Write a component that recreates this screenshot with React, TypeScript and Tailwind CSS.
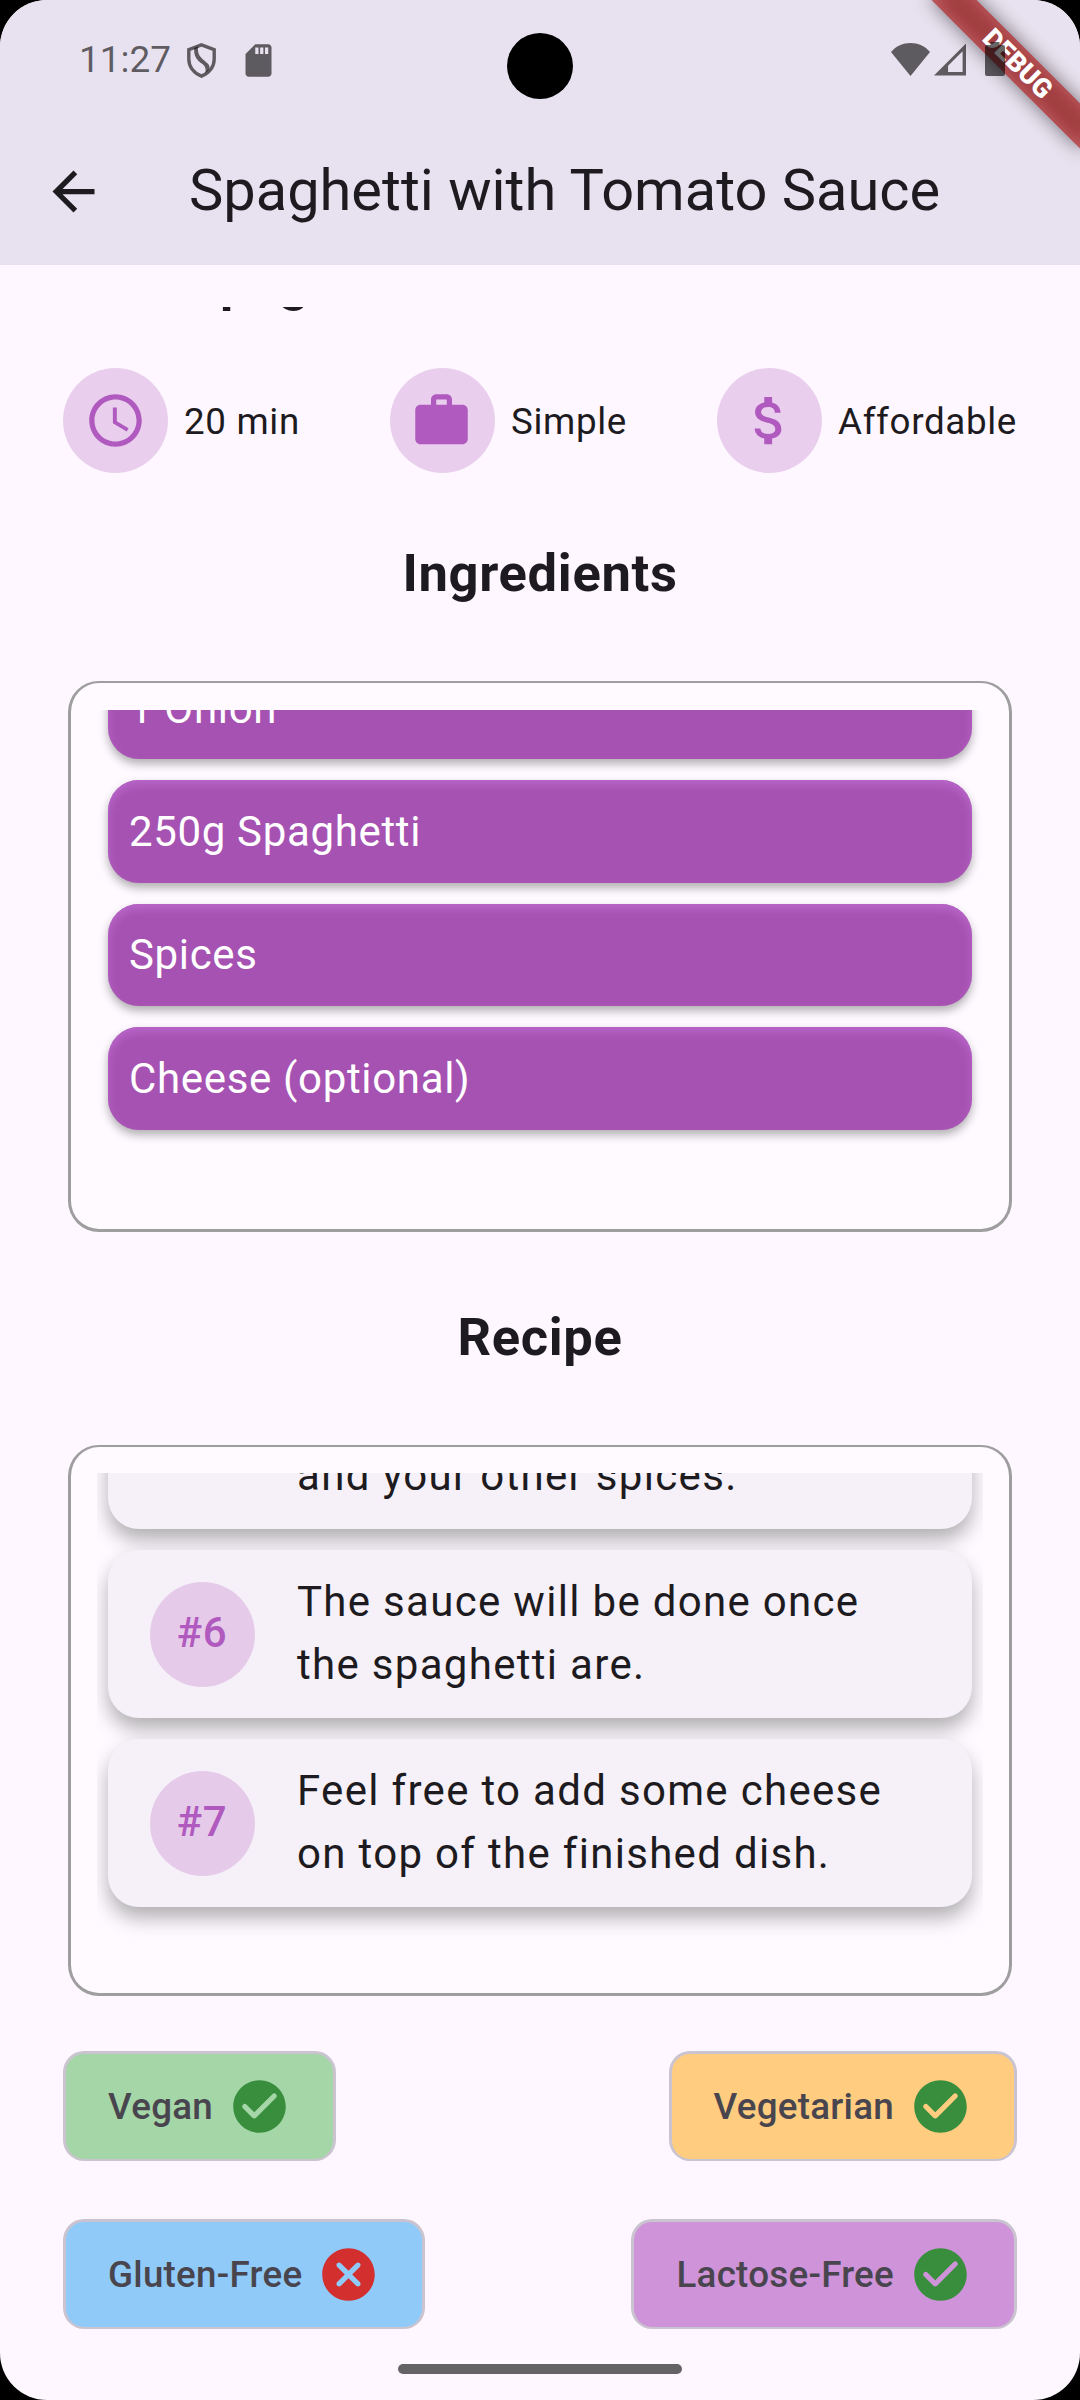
import type { ReactNode } from "react";

type IconProps = { d: string; className?: string };

function Icon({ d, className = "" }: IconProps) {
  return (
    <svg viewBox="0 0 24 24" className={`block size-[63px] shrink-0 fill-current ${className}`}>
      <path d={d} />
    </svg>
  );
}

const ARROW_BACK = "M20 11H7.83l5.59-5.59L12 4l-8 8 8 8 1.41-1.41L7.83 13H20v-2z";
const CLOCK =
  "M11.99 2C6.47 2 2 6.48 2 12s4.47 10 9.99 10C17.52 22 22 17.52 22 12S17.52 2 11.99 2zM12 20c-4.42 0-8-3.58-8-8s3.58-8 8-8 8 3.58 8 8-3.58 8-8 8zm.5-13H11v6l5.25 3.15.75-1.23-4.5-2.67z";
const WORK =
  "M20 6h-4V4c0-1.11-.89-2-2-2h-4c-1.11 0-2 .89-2 2v2H4c-1.11 0-1.99.89-1.99 2L2 19c0 1.11.89 2 2 2h16c1.11 0 2-.89 2-2V8c0-1.11-.89-2-2-2zm-6 0h-4V4h4v2z";
const MONEY =
  "M11.8 10.9c-2.27-.59-3-1.2-3-2.15 0-1.09 1.01-1.85 2.7-1.85 1.78 0 2.44.85 2.5 2.1h2.21c-.07-1.72-1.12-3.3-3.21-3.81V3h-3v2.16c-1.94.42-3.5 1.68-3.5 3.61 0 2.31 1.91 3.46 4.7 4.13 2.5.6 3 1.48 3 2.41 0 .69-.49 1.79-2.7 1.79-2.06 0-2.87-.92-2.98-2.1h-2.2c.12 2.19 1.76 3.42 3.68 3.83V21h3v-2.15c1.95-.37 3.5-1.5 3.5-3.55 0-2.84-2.43-3.81-4.7-4.4z";
const CHECK =
  "M12 2C6.48 2 2 6.48 2 12s4.48 10 10 10 10-4.48 10-10S17.52 2 12 2zM9.29 16.29L5.7 12.7c-.39-.39-.39-1.02 0-1.41.39-.39 1.02-.39 1.41 0L10 14.17l6.88-6.88c.39-.39 1.02-.39 1.41 0 .39.39.39 1.02 0 1.41l-7.59 7.59c-.38.39-1.02.39-1.41 0z";
const CANCEL =
  "M12 2C6.47 2 2 6.47 2 12s4.47 10 10 10 10-4.47 10-10S17.53 2 12 2zm4.3 14.3c-.39.39-1.02.39-1.41 0L12 13.41 9.11 16.3c-.39.39-1.02.39-1.41 0-.39-.39-.39-1.02 0-1.41L10.59 12 7.7 9.11c-.39-.39-.39-1.02 0-1.41.39-.39 1.02-.39 1.41 0L12 10.59l2.89-2.89c.39-.39 1.02-.39 1.41 0 .39.39.39 1.02 0 1.41L13.41 12l2.89 2.89c.38.38.38 1.02 0 1.41z";
const SD_CARD =
  "M18 2h-8L4.02 8 4 20c0 1.1.9 2 2 2h12c1.1 0 2-.9 2-2V4c0-1.1-.9-2-2-2zm-6 6h-2V4h2v4zm3 0h-2V4h2v4zm3 0h-2V4h2v4z";

function StatusBar() {
  return (
    <div className="relative z-20 flex h-[118px] items-center pr-[75px] pl-[79px] text-black/60">
      <span className="mt-[2px] w-[108px] text-[37px] leading-[44px]">11:27</span>
      <svg viewBox="0 0 29 35" className="mt-[3px] h-[35px] w-[29px]">
        <path
          d="M14.5 1.9 27.2 6.6V16c0 7.6-4.8 14-12.7 17.1C6.6 30 1.8 23.6 1.8 16V6.600Z"
          fill="none"
          stroke="currentColor"
          strokeWidth="3.4"
        />
        <path
          d="M7.2 5 11 3.6C10.500 10 12 13 16 16.500c3.500 3 7.500 5.500 6.500 8.800-.8 2-2.500 3.900-4.300 4.900 1-4.200.3-6.700-2.700-9.200C10 17.500 6.500 13 7.200 5Z"
          fill="currentColor"
        />
      </svg>
      <Icon d={SD_CARD} className="mt-[2px] ml-[23px] !size-[39px]" />
      <div className="ml-auto flex items-center">
        <svg viewBox="0 0 39 33" className="h-[33px] w-[39px] fill-current">
          <path d="M0 9C5 3 12 0 19.500 0S34 3 39 9L19.500 33Z" />
        </svg>
        <svg viewBox="0 0 33 33" className="ml-[4px] h-[33px] w-[32px] fill-current">
          <path fillRule="evenodd" d="M33 0V33H0ZM29.500 8 14.500 23V29.500H29.500Z" />
        </svg>
        <svg viewBox="0 0 20 34" className="ml-[19px] h-[34px] w-[20px] fill-current">
          <path d="M5.500 0h9v3H18a2 2 0 0 1 2 2v27a2 2 0 0 1-2 2H2a2 2 0 0 1-2-2V5a2 2 0 0 1 2-2h3.500Z" />
        </svg>
      </div>
      <div className="absolute top-[33px] left-[507px] size-[66px] rounded-full bg-black" />
    </div>
  );
}

function DebugBanner() {
  return (
    <div className="pointer-events-none absolute top-0 right-0 z-10 size-[210px] overflow-hidden">
      <div className="absolute top-[47px] left-[42px] h-[32px] w-[210px] rotate-45 bg-black/50 blur-[9.5px]" />
      <div className="absolute top-[47px] left-[42px] flex h-[32px] w-[210px] rotate-45 items-center justify-center bg-[#b71c1c]/63 pl-[2px] text-[26.8px] leading-none font-black text-white">
        DEBUG
      </div>
    </div>
  );
}

function Info({ icon, label }: { icon: string; label: string }) {
  return (
    <div className="flex items-center gap-[16px]">
      <div className="flex size-[105px] items-center justify-center rounded-full bg-[#e9cfed] pr-[1px] text-[#b05abf]">
        <Icon d={icon} />
      </div>
      <span className="mt-[2px] text-[36.75px] leading-[52px] tracking-[0.66px]">{label}</span>
    </div>
  );
}

function Heading({ children, className }: { children: ReactNode; className: string }) {
  return (
    <h2 className={`text-center text-[52.5px] leading-[63px] font-bold tracking-[0.66px] ${className}`}>
      {children}
    </h2>
  );
}

function Ingredient({ name }: { name: string }) {
  return (
    <li className="flex h-[102.375px] shrink-0 items-center rounded-[31px] bg-[#a652b2] px-[21px] text-[42px] leading-[63px] tracking-[0.66px] text-white shadow-[0_5px_10px_rgba(0,0,0,0.3),inset_0_5px_10px_#b966ca]">
      {name}
    </li>
  );
}

function Step({ number, lines }: { number: number; lines: string[] }) {
  return (
    <li className="flex h-[168px] shrink-0 items-center rounded-[31px] bg-[#f6f1f9] pl-[41.5px] shadow-[0_11px_20px_rgba(0,0,0,0.3)]">
      <div className="flex size-[105px] items-center justify-center rounded-full bg-[#e5cbe9] pb-[4px] text-[42px] leading-[63px] font-medium tracking-[0.66px] text-[#b05abf]">
        #{number}
      </div>
      <p className="mb-[2px] ml-[42.5px] text-[42px] leading-[63px] tracking-[1.31px]">
        {lines.map((l) => (
          <span key={l} className="block whitespace-nowrap">
            {l}
          </span>
        ))}
      </p>
    </li>
  );
}

function Chip({ label, ok, color }: { label: string; ok: boolean; color: string }) {
  return (
    <div
      className={`flex h-[110px] items-center gap-[15px] rounded-[21px] border-[3px] border-b-[2px] border-[#cac4d0] pr-[42px] pl-[42px] ${color}`}
    >
      <span className="text-[36.75px] leading-[52px] font-medium tracking-[0.26px] text-[#49454f]">{label}</span>
      <Icon d={ok ? CHECK : CANCEL} className={ok ? "text-[#388e3c]" : "text-[#d32f2f]"} />
    </div>
  );
}

export default function App() {
  return (
    <div className="h-[2400px] w-[1080px] bg-black font-['Roboto',sans-serif] text-[#1d1b20]">
      <div className="relative h-full overflow-hidden rounded-[47px] bg-[#fef7ff]">
        <DebugBanner />
        <header className="h-[265px] bg-[#e8e1ef]">
          <StatusBar />
          <div className="flex h-[147px] items-center pl-[42px]">
            <Icon d={ARROW_BACK} />
            <h1 className="mb-[2px] ml-[84px] text-[57.75px] leading-[73px]">Spaghetti with Tomato Sauce</h1>
          </div>
        </header>

        <main className="flex flex-col">
          <div className="mt-[42px] flex h-[7px] items-end justify-center overflow-hidden">
            <Heading className="shrink-0 whitespace-nowrap">Spaghetti with Tomato Sauce</Heading>
          </div>

          <div className="mt-[54px] flex justify-between px-[63px]">
            <Info icon={CLOCK} label="20 min" />
            <Info icon={WORK} label="Simple" />
            <Info icon={MONEY} label="Affordable" />
          </div>

          <Heading className="mt-[69px]">Ingredients</Heading>
          <section className="mx-[68px] mt-[76px] h-[551px] rounded-[31px] border-[3px] border-t-[2px] border-[#9e9e9e] bg-[#fefaff] px-[26px] pt-[27px] pb-[26px]">
            <ul className="flex h-full flex-col justify-end gap-[21px] overflow-hidden px-[11px] pb-[73.5px]">
              <Ingredient name="1 Onion" />
              <Ingredient name="250g Spaghetti" />
              <Ingredient name="Spices" />
              <Ingredient name="Cheese (optional)" />
            </ul>
          </section>

          <Heading className="mt-[74px]">Recipe</Heading>
          <section className="mx-[68px] mt-[76px] h-[551px] rounded-[31px] border-[3px] border-t-[2px] border-[#9e9e9e] bg-[#fefaff] px-[26px] pt-[26px] pb-[26px]">
            <ul className="flex h-full flex-col justify-end gap-[21px] overflow-hidden px-[11px] pb-[60px]">
              <li className="flex h-[231px] shrink-0 items-end rounded-[31px] bg-[#f6f1f9] pb-[22px] pl-[189px] text-[42px] leading-[63px] tracking-[1.31px] shadow-[0_11px_20px_rgba(0,0,0,0.3)]">
                and your other spices.
              </li>
              <Step number={6} lines={["The sauce will be done once", "the spaghetti are."]} />
              <Step number={7} lines={["Feel free to add some cheese", "on top of the finished dish."]} />
            </ul>
          </section>

          <div className="mt-[55px] flex flex-col gap-[58px] px-[63px]">
            <div className="flex justify-between">
              <Chip label="Vegan" ok color="bg-[#a5d6a7]" />
              <Chip label="Vegetarian" ok color="bg-[#ffcc80]" />
            </div>
            <div className="flex justify-between">
              <Chip label="Gluten-Free" ok={false} color="bg-[#90caf9]" />
              <Chip label="Lactose-Free" ok color="bg-[#ce93d8]" />
            </div>
          </div>

          <div className="mx-auto mt-[35px] h-[10px] w-[284px] rounded-full bg-black/60" />
        </main>
      </div>
    </div>
  );
}
